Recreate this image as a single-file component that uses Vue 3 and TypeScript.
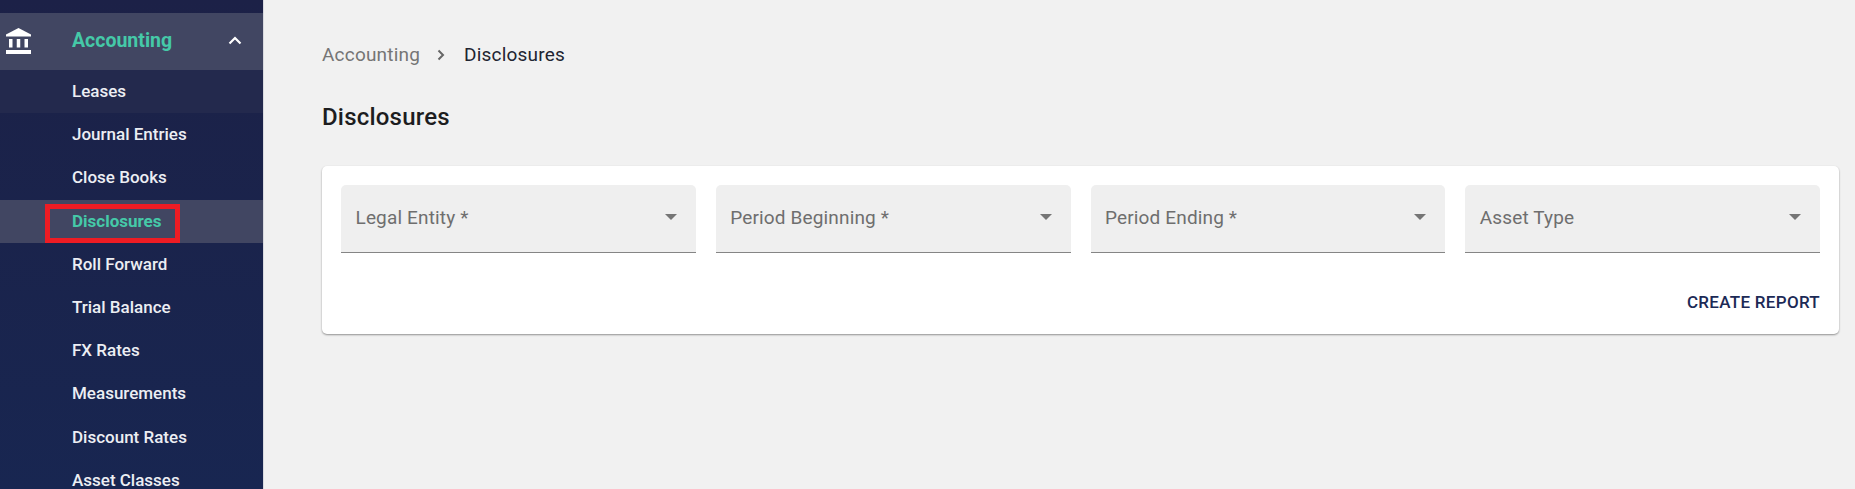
<template>
  <div class="layout">
    <aside class="sidebar">
      <div class="group-head">
        <svg class="bank" viewBox="0 0 25 26" width="25" height="26">
          <path d="M12.5 0 L25 6.5 V8.5 H0 V6.5 Z" fill="#fff" />
          <rect x="3" y="11" width="3.5" height="8.5" fill="#fff" />
          <rect x="10.75" y="11" width="3.5" height="8.5" fill="#fff" />
          <rect x="18.5" y="11" width="3.5" height="8.5" fill="#fff" />
          <rect x="0" y="22" width="25" height="4" fill="#fff" />
        </svg>
        <span class="group-label">Accounting</span>
        <svg class="chevron" viewBox="0 0 14 9" width="14" height="9">
          <path d="M1.5 7.5 L7 2 L12.5 7.5" fill="none" stroke="#fff" stroke-width="2.2" />
        </svg>
      </div>
      <ul class="nav-list">
        <li
          v-for="item in navItems"
          :key="item"
          class="nav-item"
          :class="{ hovered: item === 'Leases', active: item === activeItem }"
        >
          <span class="nav-label" :class="{ outlined: item === activeItem }">{{ item }}</span>
        </li>
      </ul>
    </aside>

    <main class="content">
      <nav class="breadcrumb">
        <span class="crumb-parent">Accounting</span>
        <svg class="crumb-sep" viewBox="0 0 8 12" width="8" height="12">
          <path d="M1.5 1.5 L6 6 L1.5 10.5" fill="none" stroke="#666" stroke-width="2" />
        </svg>
        <span class="crumb-current">{{ activeItem }}</span>
      </nav>
      <h1 class="title">{{ activeItem }}</h1>
      <section class="card">
        <div class="fields">
          <div v-for="field in fields" :key="field" class="field">
            <span class="field-label">{{ field }}</span>
            <span class="caret"></span>
          </div>
        </div>
        <div class="actions">
          <button class="create" type="button">CREATE REPORT</button>
        </div>
      </section>
    </main>
  </div>
</template>

<script setup lang="ts">
  const activeItem = 'Disclosures';

  const navItems: string[] = [
    'Leases',
    'Journal Entries',
    'Close Books',
    'Disclosures',
    'Roll Forward',
    'Trial Balance',
    'FX Rates',
    'Measurements',
    'Discount Rates',
    'Asset Classes',
  ];

  const fields: string[] = ['Legal Entity *', 'Period Beginning *', 'Period Ending *', 'Asset Type'];
</script>

<style>
  html,
  body {
    margin: 0;
    overflow: hidden;
  }
</style>

<style scoped>
  .layout {
    display: flex;
    height: 489px;
    overflow: hidden;
    background: #f1f1f1;
    font-family: Roboto, "Liberation Sans", sans-serif;
  }

  .sidebar {
    width: 264px;
    flex-shrink: 0;
    padding-top: 13px;
    box-sizing: border-box;
    border-right: 1px solid #d9dadf;
    background: linear-gradient(to bottom, #1c2147, #182651);
    overflow: hidden;
  }

  .group-head {
    display: flex;
    align-items: center;
    height: 57px;
    background: #414662;
  }

  .bank {
    margin-left: 6px;
    margin-top: -1px;
  }

  .group-label {
    margin-left: 41px;
    margin-top: -2px;
    font-size: 19.5px;
    font-weight: 700;
    color: #45c9a8;
  }

  .chevron {
    margin-left: 56px;
    margin-top: -2px;
  }

  .nav-list {
    margin: 0;
    padding: 0;
    list-style: none;
  }

  .nav-item {
    display: flex;
    align-items: center;
    height: 43.2px;
    padding-left: 72px;
    padding-bottom: 1px;
    box-sizing: border-box;
    font-size: 17px;
    font-weight: 500;
    color: #eceef3;
  }

  .nav-item.hovered {
    background: #23294d;
  }

  .nav-item.active {
    background: #414662;
    color: #45c9a8;
    font-weight: 700;
  }

  .nav-label {
    position: relative;
  }

  .nav-label.outlined::after {
    content: '';
    position: absolute;
    left: -27px;
    right: -19px;
    top: -7px;
    bottom: -12px;
    border: 5px solid #ed1c24;
    pointer-events: none;
  }

  .content {
    flex: 1;
    padding: 43px 16px 0 58px;
    min-width: 0;
  }

  .breadcrumb {
    display: flex;
    align-items: center;
    height: 22px;
    font-size: 19px;
    letter-spacing: 0.2px;
  }

  .crumb-parent {
    color: #757575;
  }

  .crumb-sep {
    margin: 1px 19px 0 17px;
  }

  .crumb-current {
    color: #212430;
  }

  .title {
    margin: 36px 0 0;
    height: 32px;
    line-height: 32px;
    font-size: 24px;
    font-weight: 500;
    letter-spacing: 0.2px;
    color: #1d1d1f;
  }

  .card {
    margin-top: 33px;
    height: 168px;
    padding: 19px 19px 0;
    box-sizing: border-box;
    border-radius: 5px;
    background: #fff;
    box-shadow: 0 1px 2px rgba(0, 0, 0, 0.4);
  }

  .fields {
    display: grid;
    grid-template-columns: repeat(4, 1fr);
    gap: 20px;
  }

  .field {
    display: flex;
    align-items: center;
    justify-content: space-between;
    height: 68px;
    padding: 0 19px 3px 14.5px;
    box-sizing: border-box;
    border-bottom: 1px solid #858585;
    border-radius: 5px 5px 0 0;
    background: #efefef;
  }

  .field-label {
    font-size: 19px;
    letter-spacing: 0.15px;
    color: #6e6e6e;
  }

  .caret {
    width: 0;
    height: 0;
    border-left: 6.5px solid transparent;
    border-right: 6.5px solid transparent;
    border-top: 6.5px solid #757575;
  }

  .actions {
    display: flex;
    justify-content: flex-end;
    margin-top: 39px;
  }

  .create {
    padding: 0;
    border: 0;
    background: none;
    font-family: inherit;
    font-size: 17px;
    font-weight: 500;
    letter-spacing: 0.3px;
    color: #1c2a56;
  }
</style>
